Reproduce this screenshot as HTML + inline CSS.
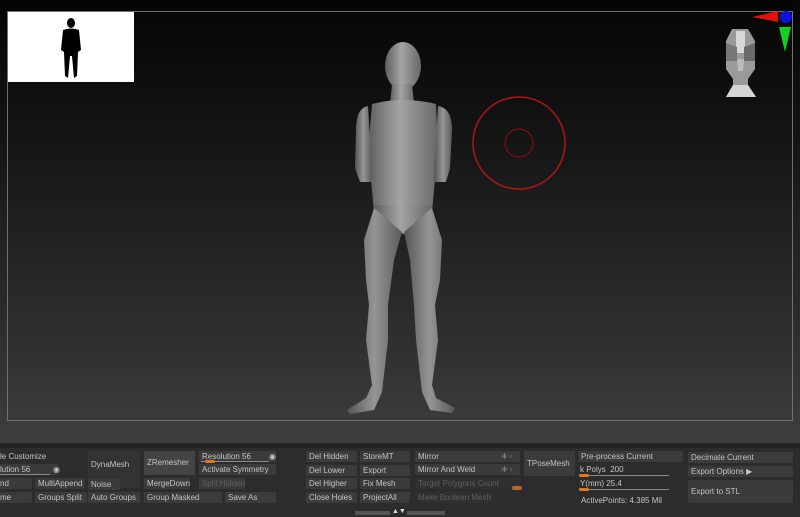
<!DOCTYPE html><html><head><style>
*{margin:0;padding:0;box-sizing:border-box}
body{width:800px;height:517px;overflow:hidden;background:#2c2c2c;font-family:"Liberation Sans",sans-serif;position:relative}
#vp{position:absolute;left:0;top:0;width:800px;height:443px;background:linear-gradient(#050505 0%,#141414 30%,#2e2e2e 75%,#3e3e3e 100%)}
#frame{position:absolute;left:7px;top:11px;width:786px;height:410px;border:1px solid #707070}
#band{position:absolute;left:0;top:443px;width:800px;height:5px;background:#232323}
.b{position:absolute;background:#3b3b3b;color:#c4c4c4;font-size:8px;line-height:11px;padding-left:3px;white-space:nowrap;border-radius:1px}
.t{position:absolute;color:#c4c4c4;font-size:8px;line-height:11px;white-space:nowrap}
.d{color:#5e5e5e}
.sl{position:absolute;height:1px;background:#888}
.kn{position:absolute;width:10px;height:3px;background:#e07a1a;border-radius:2px}
</style></head><body>
<div id="vp"></div>
<div id="frame"></div>
<div style="position:absolute;left:8px;top:12px;width:126px;height:70px;background:#fff"></div>
<svg style="position:absolute;left:8px;top:12px" width="126" height="70" viewBox="0 0 126 70">
<g fill="#000"><ellipse cx="63" cy="11" rx="4" ry="5"/><path d="M55 18 Q63 15 71 18 L73 38 L70 40 L69 64 L66 66 L64 44 L62 44 L60 66 L57 64 L56 40 L53 38 Z"/></g></svg>
<svg style="position:absolute;left:0;top:0" width="800" height="443">
<defs><linearGradient id="g" x1="0" x2="1"><stop offset="0" stop-color="#5e5e5e"/><stop offset=".45" stop-color="#a4a4a4"/><stop offset="1" stop-color="#686868"/></linearGradient>
<linearGradient id="g2" x1="0" x2="1"><stop offset="0" stop-color="#555"/><stop offset=".5" stop-color="#959595"/><stop offset="1" stop-color="#5a5a5a"/></linearGradient></defs>
<g fill="url(#g)">
<ellipse cx="403" cy="66" rx="18" ry="24"/>
<path d="M392 84 L412 84 L414 104 L390 104 Z"/>
<path d="M372 104 Q403 96 436 104 L438 150 L434 190 L432 212 L374 212 L372 190 L368 150 Z"/>
<path d="M374 205 L432 205 Q430 225 404 234 Q378 225 374 205 Z"/>
</g>
<g fill="url(#g2)">
<path d="M374 208 L364 240 L366 280 L369 305 L366 340 L372 385 L366 398 L347 410 L350 414 L374 410 L382 392 L388 340 L388 305 L394 260 L402 232 Z"/>
<path d="M432 208 L442 240 L440 280 L435 305 L438 340 L432 385 L436 398 L455 408 L452 413 L430 410 L422 392 L416 340 L414 305 L410 260 L404 232 Z"/>
<path d="M368 106 Q356 108 356 130 L355 168 L360 182 L372 182 L372 165 L370 140 Z"/>
<path d="M438 106 Q452 108 452 130 L450 168 L446 182 L434 182 L434 165 L436 140 Z"/>
</g>
<circle cx="519" cy="143" r="46" fill="none" stroke="#b01515" stroke-width="1.5"/>
<circle cx="519" cy="143" r="14" fill="none" stroke="#8a1010" stroke-width="1"/>
<g transform="translate(724,29)"><path d="M8 0 L24 0 L31 12 L31 40 L24 50 L24 56 L32 68 L2 68 L9 56 L9 50 L2 40 L2 12 Z" fill="#9a9a9a"/><path d="M12 2 L21 2 L21 24 L12 24Z" fill="#d8d8d8"/><path d="M2 14 L13 18 L13 32 L2 32Z" fill="#777"/><path d="M31 14 L20 18 L20 32 L31 32Z" fill="#6a6a6a"/><path d="M13 30 L20 30 L19 42 L14 42Z" fill="#bbb"/><path d="M9 56 L24 56 L32 68 L2 68Z" fill="#d5d5d5"/></g>
<path d="M752 17 L778 11 L778 22 Z" fill="#e01010"/><circle cx="786" cy="17" r="6" fill="#1010e0"/><path d="M779 27 L791 27 L785 52 Z" fill="#10d020"/>
</svg>
<div id="band"></div>
<div class="t" style="left:0;top:451px">le Customize</div>
<div class="b" style="left:0;top:464px;width:58px;padding-left:0">lution 56<span style="position:absolute;left:53px;top:0">◉</span></div>
<div class="sl" style="left:0;top:474px;width:50px"></div>
<div class="b" style="left:0;top:478px;width:32px;padding-left:0">nd</div>
<div class="b" style="left:35px;top:478px;width:50px">MultiAppend</div>
<div class="b" style="left:0;top:492px;width:32px;padding-left:0">me</div>
<div class="b" style="left:35px;top:492px;width:52px">Groups Split</div>
<div class="b" style="left:88px;top:451px;width:52px;height:37px;line-height:28px;background:#333">DynaMesh</div>
<div class="b" style="left:88px;top:479px;width:32px">Noise</div>
<div class="b" style="left:88px;top:492px;width:52px">Auto Groups</div>
<div class="b" style="left:144px;top:451px;width:51px;height:24px;line-height:24px;background:#444">ZRemesher</div>
<div class="b" style="left:144px;top:478px;width:46px">MergeDown</div>
<div class="b" style="left:144px;top:492px;width:78px">Group Masked</div>
<div class="b" style="left:199px;top:451px;width:77px">Resolution 56<span style="position:absolute;left:70px">◉</span></div>
<div class="sl" style="left:201px;top:461px;width:68px"></div><div class="kn" style="left:205px;top:460px"></div>
<div class="b" style="left:199px;top:464px;width:77px">Activate Symmetry</div>
<div class="b d" style="left:199px;top:478px;width:46px">Split Hidden</div>
<div class="b" style="left:225px;top:492px;width:51px">Save As</div>
<div class="b" style="left:306px;top:451px;width:51px">Del Hidden</div>
<div class="b" style="left:360px;top:451px;width:50px">StoreMT</div>
<div class="b" style="left:306px;top:465px;width:51px">Del Lower</div>
<div class="b" style="left:360px;top:465px;width:50px">Export</div>
<div class="b" style="left:306px;top:478px;width:51px">Del Higher</div>
<div class="b" style="left:360px;top:478px;width:50px">Fix Mesh</div>
<div class="b" style="left:306px;top:492px;width:51px">Close Holes</div>
<div class="b" style="left:360px;top:492px;width:50px">ProjectAll</div>
<div class="b" style="left:415px;top:451px;width:105px">Mirror<span style="position:absolute;left:86px;color:#999">⁜ ◦</span></div>
<div class="b" style="left:415px;top:464px;width:105px">Mirror And Weld<span style="position:absolute;left:86px;color:#999">⁜ ◦</span></div>
<div class="b d" style="left:415px;top:478px;width:105px;background:#303030">Target Polygons Count</div>
<div class="kn" style="left:512px;top:486px;height:4px;background:#b06a2a"></div>
<div class="b d" style="left:415px;top:492px;width:80px;background:#303030">Make Boolean Mesh</div>
<div class="b" style="left:524px;top:451px;width:51px;height:25px;line-height:25px">TPoseMesh</div>
<div class="b" style="left:578px;top:451px;width:105px">Pre-process Current</div>
<div class="t" style="left:580px;top:464px">k Polys &nbsp;200</div>
<div class="sl" style="left:579px;top:475px;width:90px"></div><div class="kn" style="left:579px;top:474px"></div>
<div class="t" style="left:580px;top:478px">Y(mm) 25.4</div>
<div class="sl" style="left:579px;top:489px;width:90px"></div><div class="kn" style="left:579px;top:488px"></div>
<div class="t" style="left:581px;top:495px">ActivePoints: 4.385 Mil</div>
<div class="b" style="left:688px;top:452px;width:105px">Decimate Current</div>
<div class="b" style="left:688px;top:466px;width:105px">Export Options ▶</div>
<div class="b" style="left:688px;top:480px;width:105px;height:23px;line-height:23px">Export to STL</div>
<div style="position:absolute;left:355px;top:511px;width:35px;height:4px;background:#555"></div>
<div style="position:absolute;left:407px;top:511px;width:38px;height:4px;background:#555"></div>
<div class="t" style="left:392px;top:506px;font-size:7px;color:#ddd">▲▼</div>
</body></html>
